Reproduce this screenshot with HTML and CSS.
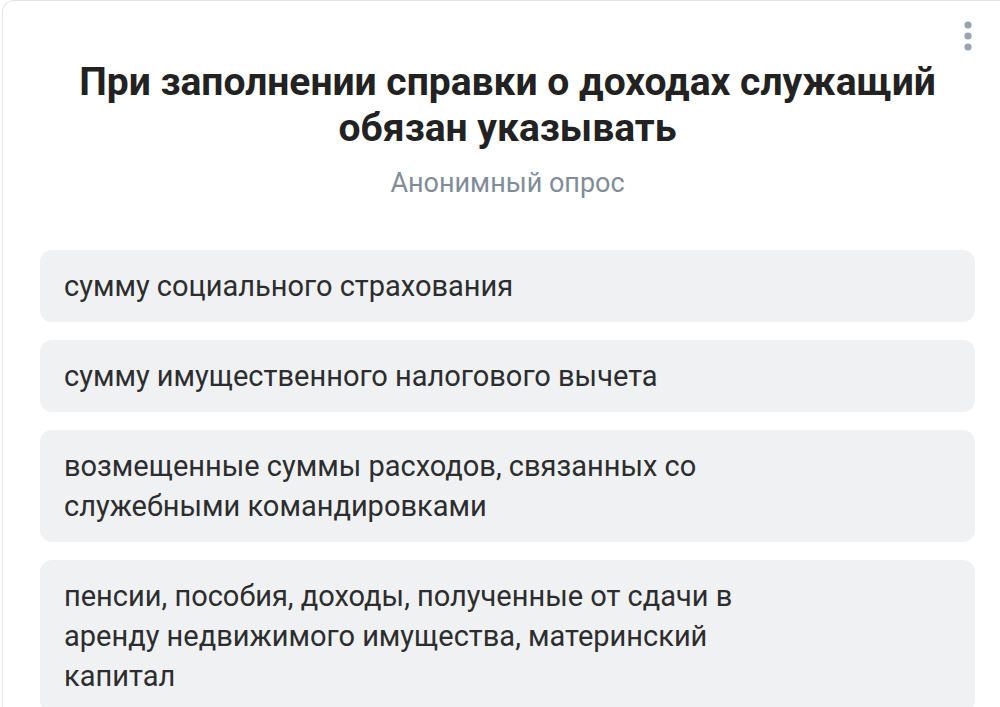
FILE: index.html
```html
<!DOCTYPE html>
<html lang="ru">
<head>
    <meta charset="UTF-8">
    <meta name="viewport" content="width=device-width, initial-scale=1.0">
    <title>Опрос</title>
    <link rel="stylesheet" href="styles.css">
</head>
<body>
    <div class="poll">
        <button class="poll-menu" aria-label="Меню">
            <svg width="10" height="32" viewBox="0 0 10 32">
                <circle cx="5" cy="5" r="3.6" />
                <circle cx="5" cy="16" r="3.6" />
                <circle cx="5" cy="27" r="3.6" />
            </svg>
        </button>

        <div class="poll-head">
            <h1 class="poll-title">При заполнении справки о доходах служащий обязан указывать</h1>
            <div class="poll-type">Анонимный опрос</div>
        </div>

        <div class="poll-options">
            <div class="poll-option"><span class="option-text">сумму социального страхования</span></div>
            <div class="poll-option"><span class="option-text">сумму имущественного налогового вычета</span></div>
            <div class="poll-option"><span class="option-text">возмещенные суммы расходов, связанных со служебными командировками</span></div>
            <div class="poll-option"><span class="option-text">пенсии, пособия, доходы, полученные от сдачи в аренду недвижимого имущества, материнский капитал</span></div>
        </div>
    </div>
</body>
</html>
```

FILE: styles.css
```css
:root {
    --text-color: #222222;
    --muted-color: #818c99;
    --option-bg: #f0f1f3;
    --border-color: #e3e4e8;
}

body {
    margin: 0;
    padding: 0;
    background-color: #ffffff;
    font-family: Roboto, "Noto Sans", sans-serif;
    color: var(--text-color);
    overflow: hidden;
}

.poll {
    position: relative;
    margin-left: 2px;
    width: 1020px;
    min-height: 720px;
    background-color: #ffffff;
    border: 1px solid var(--border-color);
    border-right: none;
    border-bottom: none;
    border-radius: 12px 0 0 0;
    box-sizing: border-box;
    padding: 58px 0 0 37px;
}

.poll-menu {
    position: absolute;
    top: 19px;
    right: 49px;
    padding: 0;
    border: none;
    background: none;
    fill: #99a2ad;
    line-height: 0;
}

.poll-head {
    width: 935px;
    text-align: center;
}

.poll-title {
    margin: 0 auto;
    max-width: 880px;
    font-size: 39px;
    line-height: 46px;
    font-weight: 700;
    color: var(--text-color);
}

.poll-type {
    margin-top: 16px;
    font-size: 27px;
    line-height: 32px;
    color: var(--muted-color);
}

.poll-options {
    width: 935px;
    margin-top: 51px;
    display: flex;
    flex-direction: column;
    gap: 18px;
}

.poll-option {
    background-color: var(--option-bg);
    border-radius: 12px;
    padding: 16px 160px 16px 24px;
    font-size: 29px;
    line-height: 40px;
    color: #2c2d2e;
}
```
